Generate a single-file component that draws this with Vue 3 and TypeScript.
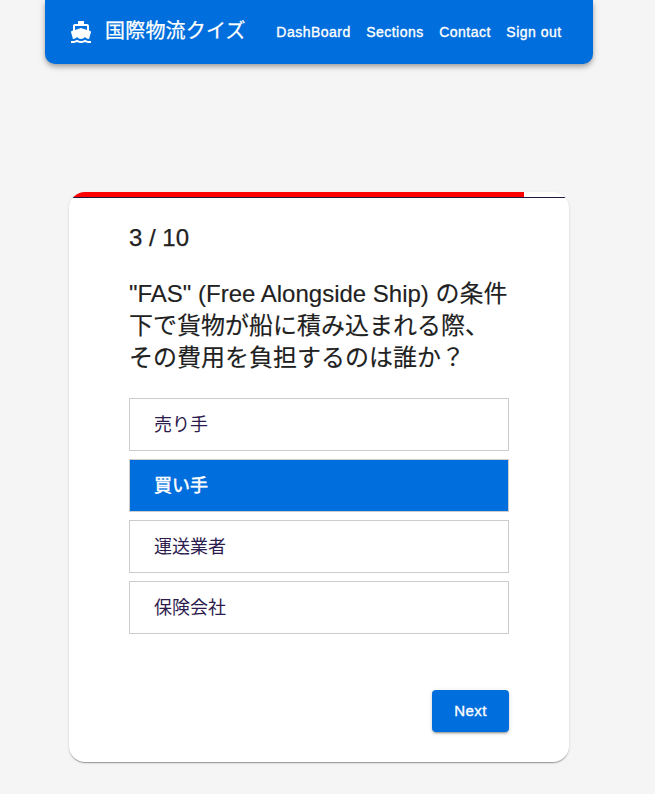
<script setup lang="ts">
import { ref } from 'vue'

const links: string[] = ['DashBoard', 'Sections', 'Contact', 'Sign out']
const choices: string[] = ['売り手', '買い手', '運送業者', '保険会社']
const selected = ref<number>(1)
const timeLeft = ref<number>(91)
</script>

<template>
  <div class="page">
    <header class="bar">
      <svg class="logo" viewBox="0 0 24 24" aria-hidden="true">
        <path fill="currentColor" d="M20 21c-1.39 0-2.78-.47-4-1.32-2.44 1.71-5.56 1.71-8 0C6.78 20.53 5.39 21 4 21H2v2h2c1.38 0 2.74-.35 4-.99 2.52 1.29 5.48 1.29 8 0 1.26.65 2.62.99 4 .99h2v-2h-2zM3.95 19H4c1.6 0 3.02-.88 4-2 .98 1.12 2.4 2 4 2s3.02-.88 4-2c.98 1.12 2.4 2 4 2h.05l1.89-6.68c.08-.26.06-.54-.06-.78s-.34-.42-.6-.5L20 10.620V6c0-1.100-.9-2-2-2h-3V1H9v3H6c-1.100 0-2 .9-2 2v4.620l-1.290.420c-.26.08-.48.26-.6.5s-.15.52-.06.78L3.950 19zM6 6h12v3.970L12 8 6 9.970V6z" />
      </svg>
      <h1 class="title">国際物流クイズ</h1>
      <nav class="nav">
        <a v-for="link in links" :key="link" class="link">{{ link }}</a>
      </nav>
    </header>
    <main class="card">
      <div class="timer"><div class="elapsed" :style="{ width: timeLeft + '%' }"></div></div>
      <div class="body">
        <p class="count">3 / 10</p>
        <h2 class="question">"FAS" (Free Alongside Ship) の条件<br>下で貨物が船に積み込まれる際、<br>その費用を負担するのは誰か？</h2>
        <ul class="choices">
          <li v-for="(choice, i) in choices" :key="choice" class="choice" :class="{ active: selected === i }" @click="selected = i">{{ choice }}</li>
        </ul>
        <button class="next">Next</button>
      </div>
    </main>
  </div>
</template>

<style>
body { background: #f5f5f5; }
</style>

<style scoped>
.page {
  box-sizing: border-box;
  height: 794px;
  background: #f5f5f5;
  font-family: "Liberation Sans", "Noto Sans CJK JP", sans-serif;
  color: #212121;
}
.bar {
  box-sizing: border-box;
  display: flex;
  align-items: center;
  width: 548px;
  height: 64px;
  margin-left: 45px;
  padding: 0 24px;
  border-radius: 0 0 10px 10px;
  background: #006edc;
  color: #fff;
  box-shadow: 0 2px 4px -1px rgba(0,0,0,.2), 0 4px 5px rgba(0,0,0,.14), 0 1px 10px rgba(0,0,0,.12);
}
.logo { width: 24px; height: 24px; }
.title { margin: 0 0 3px 12px; font-size: 20px; font-weight: 400; line-height: 32px; white-space: nowrap; letter-spacing: .2px; -webkit-text-stroke: .25px; }
.nav { display: flex; gap: 15.5px; margin-left: 30.500px; }
.link { font-size: 14px; line-height: 24px; white-space: nowrap; -webkit-text-stroke: .35px; letter-spacing: .48px; }
.card {
  width: 500px;
  height: 570px;
  margin: 128px 0 0 69px;
  overflow: hidden;
  border-radius: 16px;
  background: #fff;
  box-shadow: 0 2px 1px -1px rgba(0,0,0,.2), 0 1px 1px rgba(0,0,0,.14), 0 1px 3px rgba(0,0,0,.12);
}
.timer { box-sizing: border-box; height: 6px; border-bottom: 1px solid #24153d; }
.elapsed { height: 5px; background: #f00; }
.body { display: flex; flex-direction: column; padding: 24px 60px 0; }
.count { margin: 0; font-size: 24px; line-height: 32px; -webkit-text-stroke: .25px; }
.question { margin: 24px 0; font-size: 24px; font-weight: 400; line-height: 32px; white-space: nowrap; -webkit-text-stroke: .15px; }
.choices { display: grid; gap: 8px; margin: 0; padding: 0; list-style: none; }
.choice {
  box-sizing: border-box;
  height: 53px;
  padding: 1px 0 0 24px;
  border: 1px solid #ccc;
  font-size: 18px;
  line-height: 51px;
  color: #2d1b4e;
}
.active { background: #006edc; color: #fff; -webkit-text-stroke: .5px; }
.next {
  align-self: flex-end;
  width: 77px;
  height: 42px;
  margin-top: 56px;
  padding: 0 0 2px;
  border: 0;
  border-radius: 4px;
  background: #006edc;
  color: #fff;
  font: 15px "Liberation Sans", sans-serif;
  -webkit-text-stroke: .35px;
  letter-spacing: .4px;
  box-shadow: 0 3px 1px -2px rgba(0,0,0,.2), 0 2px 2px rgba(0,0,0,.14), 0 1px 5px rgba(0,0,0,.12);
}
</style>
